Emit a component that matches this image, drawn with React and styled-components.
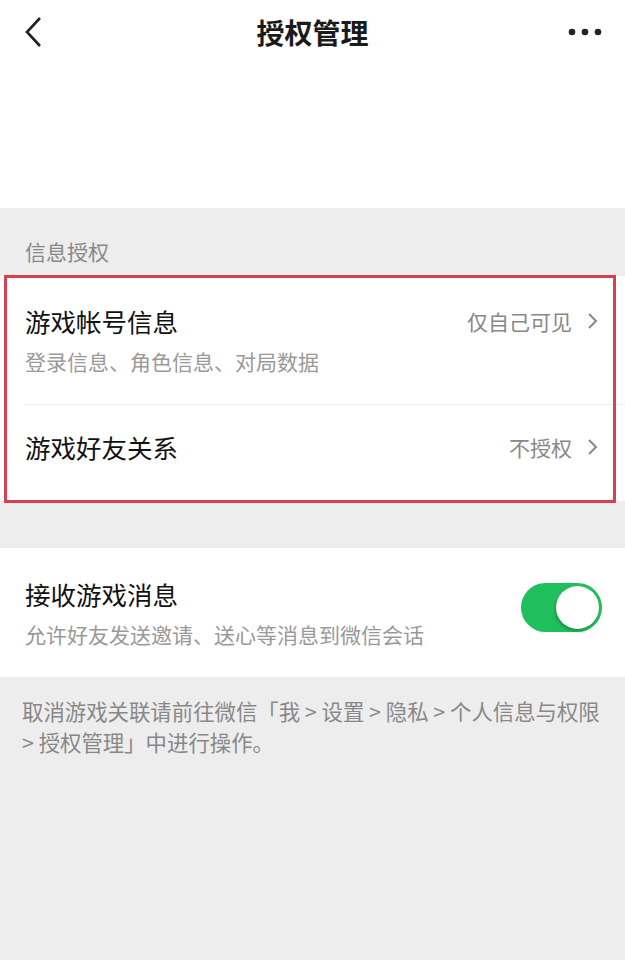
import React from "react";
import styled, { createGlobalStyle } from "styled-components";

const Global = createGlobalStyle`
  html, body {
    margin: 0;
    padding: 0;
    background: #ededed;
    font-family: "Noto Sans CJK SC", "Noto Sans", sans-serif;
  }
`;

const Page = styled.div`
  width: 625px;
  min-height: 960px;
  background: #ededed;
`;

const Header = styled.div`
  background: #fff;
  height: 208px;
`;

const NavBar = styled.div`
  height: 64px;
  display: flex;
  align-items: center;
  justify-content: space-between;
  padding: 0 22px 0 22px;
  position: relative;
`;

const Title = styled.h1`
  position: absolute;
  left: 0;
  right: 0;
  top: 0;
  margin: 0;
  line-height: 64px;
  text-align: center;
  font-size: 28px;
  font-weight: 700;
  color: #1a1a1a;
  pointer-events: none;
`;

const IconBtn = styled.div`
  display: flex;
  align-items: center;
  height: 64px;
`;

const SectionLabel = styled.div`
  padding: 29px 25px 0;
  height: 39px;
  font-size: 21px;
  color: #888;
  line-height: 28px;
`;

const Card = styled.div`
  background: #fff;
  position: relative;
  margin-top: ${(p) => p.$top || 0}px;
`;

const Highlight = styled.div`
  position: absolute;
  left: 4px;
  right: 9px;
  top: -1px;
  bottom: -2px;
  border: 3px solid #d6404f;
  pointer-events: none;
`;

const Row = styled.div`
  display: flex;
  align-items: center;
  justify-content: space-between;
  box-sizing: border-box;
  padding: 0 25px ${(p) => p.$pb || 0}px;
  height: ${(p) => p.$h}px;
  border-top: ${(p) => (p.$divider ? "1px solid #ececec" : "none")};
  margin-left: ${(p) => (p.$divider ? "25px" : "0")};
  padding-left: ${(p) => (p.$divider ? "0" : "25px")};
`;

const Texts = styled.div`
  display: flex;
  flex-direction: column;
  gap: 10px;
`;

const RowTitle = styled.div`
  font-size: 25.5px;
  line-height: 32px;
  color: #111;
`;

const RowSub = styled.div`
  font-size: 21px;
  line-height: 28px;
  color: #999;
`;

const Right = styled.div`
  display: flex;
  align-items: center;
  gap: 15px;
  font-size: 21px;
  color: #888;
  align-self: ${(p) => (p.$top ? "flex-start" : "center")};
  margin-top: ${(p) => (p.$top ? "30px" : "0")};
  margin-right: 2px;
`;

const Toggle = styled.div`
  width: 81px;
  height: 49px;
  border-radius: 25px;
  background: #1fbf5c;
  position: relative;
  margin-right: -2px;
  margin-bottom: 10px;
  &::after {
    content: "";
    position: absolute;
    right: 3px;
    top: 3px;
    width: 43px;
    height: 43px;
    border-radius: 50%;
    background: #fff;
    box-shadow: -1px 2px 3px rgba(0, 0, 0, 0.25);
  }
`;

const Footer = styled.p`
  margin: 0;
  padding: 18px 22px 0;
  font-size: 21.4px;
  line-height: 31px;
  color: #888;
`;

const Chevron = () => (
  <svg width="11" height="18" viewBox="0 0 11 18">
    <path d="M2 2 L9 9 L2 16" fill="none" stroke="#888" strokeWidth="2" />
  </svg>
);

export default function App() {
  return (
    <Page>
      <Global />
      <Header>
        <NavBar>
          <IconBtn>
            <svg width="22" height="32" viewBox="0 0 22 32">
              <path
                d="M18 2 L5 16 L18 30"
                fill="none"
                stroke="#222"
                strokeWidth="2.6"
              />
            </svg>
          </IconBtn>
          <Title>授权管理</Title>
          <IconBtn>
            <svg width="36" height="10" viewBox="0 0 36 10">
              <circle cx="5" cy="5" r="3.3" fill="#222" />
              <circle cx="18" cy="5" r="3.3" fill="#222" />
              <circle cx="31" cy="5" r="3.3" fill="#222" />
            </svg>
          </IconBtn>
        </NavBar>
      </Header>

      <SectionLabel>信息授权</SectionLabel>
      <Card>
        <Row $h={128}>
          <Texts>
            <RowTitle>游戏帐号信息</RowTitle>
            <RowSub>登录信息、角色信息、对局数据</RowSub>
          </Texts>
          <Right $top>
            仅自己可见
            <Chevron />
          </Right>
        </Row>
        <Row $h={97} $pb={12} $divider>
          <RowTitle>游戏好友关系</RowTitle>
          <Right>
            不授权
            <Chevron />
          </Right>
        </Row>
        <Highlight />
      </Card>

      <Card $top={47}>
        <Row $h={129}>
          <Texts>
            <RowTitle>接收游戏消息</RowTitle>
            <RowSub>允许好友发送邀请、送心等消息到微信会话</RowSub>
          </Texts>
          <Toggle />
        </Row>
      </Card>

      <Footer>
        取消游戏关联请前往微信「我 &gt; 设置 &gt; 隐私 &gt; 个人信息与权限 &gt; 授权管理」中进行操作。
      </Footer>
    </Page>
  );
}
